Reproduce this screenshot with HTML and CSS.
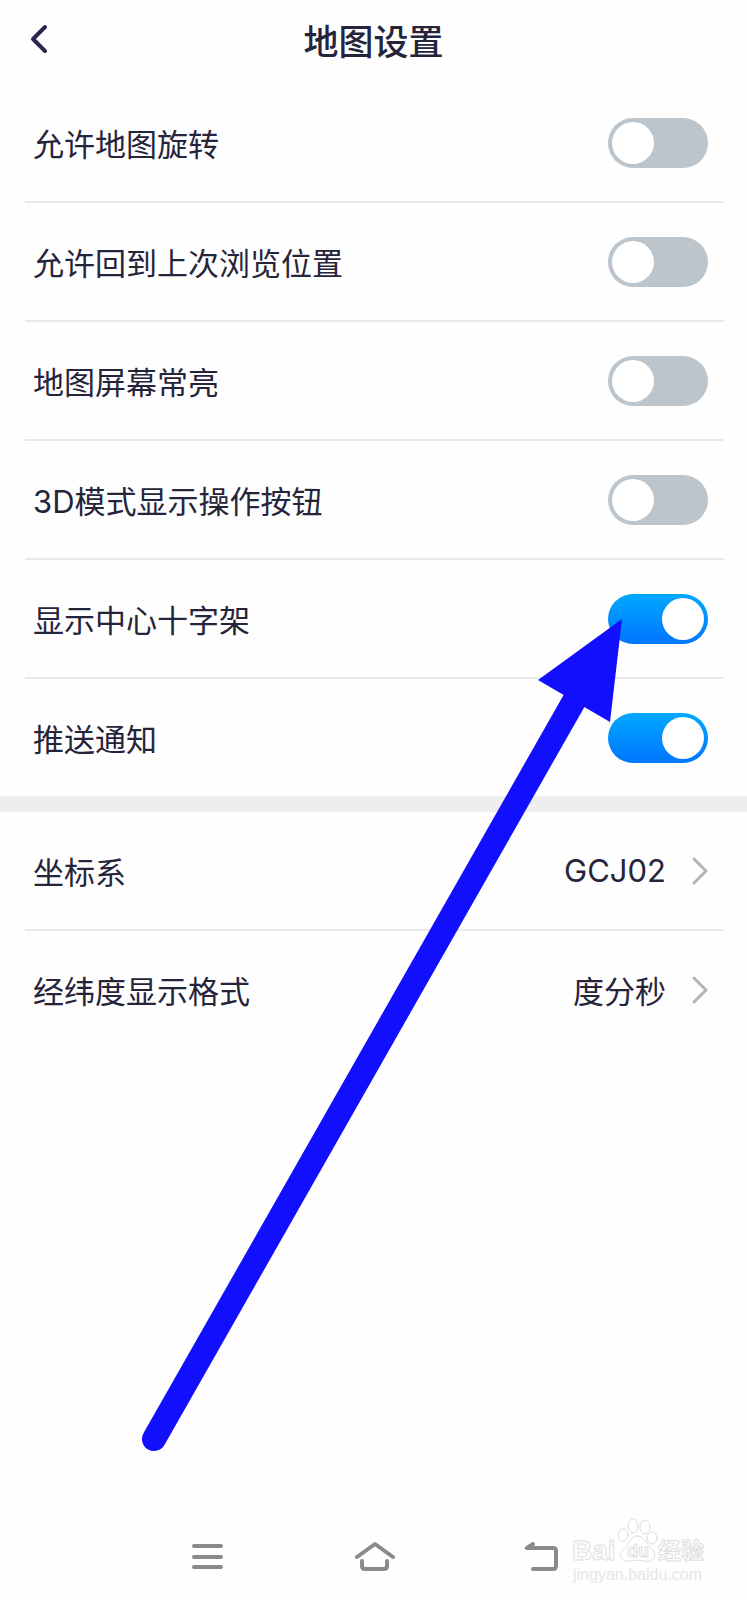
FILE: index.html
```html
<!DOCTYPE html>
<html lang="zh-CN">
<head>
  <meta charset="UTF-8">
  <meta name="viewport" content="width=device-width, initial-scale=1.0">
  <title>地图设置</title>
  <link rel="stylesheet" href="styles.css">
</head>
<body>
  <header class="header">
    <button class="back" aria-label="返回">
      <svg width="18" height="30" viewBox="0 0 18 30">
        <path d="M15 3 L3 15 L15 27" />
      </svg>
    </button>
    <h1 class="title">地图设置</h1>
  </header>

  <main>
    <section class="group">
      <label class="row">
        <span>允许地图旋转</span>
        <input class="switch" type="checkbox">
      </label>
      <label class="row">
        <span>允许回到上次浏览位置</span>
        <input class="switch" type="checkbox">
      </label>
      <label class="row">
        <span>地图屏幕常亮</span>
        <input class="switch" type="checkbox">
      </label>
      <label class="row">
        <span>3D模式显示操作按钮</span>
        <input class="switch" type="checkbox">
      </label>
      <label class="row">
        <span>显示中心十字架</span>
        <input class="switch" type="checkbox" checked>
      </label>
      <label class="row">
        <span>推送通知</span>
        <input class="switch" type="checkbox" checked>
      </label>
    </section>

    <section class="group group--links">
      <button class="row">
        <span>坐标系</span>
        <span class="value">GCJ02
          <svg class="chevron" width="17" height="28" viewBox="0 0 17 28">
            <path d="M3 2 L15 14 L3 26" />
          </svg>
        </span>
      </button>
      <button class="row">
        <span>经纬度显示格式</span>
        <span class="value">度分秒
          <svg class="chevron" width="17" height="28" viewBox="0 0 17 28">
            <path d="M3 2 L15 14 L3 26" />
          </svg>
        </span>
      </button>
    </section>
  </main>

  <nav class="navbar">
    <button class="nav-button" aria-label="菜单">
      <svg width="42" height="32" viewBox="0 0 42 32">
        <path d="M8 5 H35 M8 16 H35 M8 26 H35" />
      </svg>
    </button>
    <button class="nav-button" aria-label="主页">
      <svg width="42" height="32" viewBox="0 0 42 32">
        <path d="M4 16 L22 3 L40 16 M9 20 V25 Q9 28 12 28 H31 Q34 28 34 25 V20" />
      </svg>
    </button>
    <button class="nav-button" aria-label="后退">
      <svg width="42" height="32" viewBox="0 0 42 32">
        <path d="M13 3 L7 7 H33 Q36 7 36 10 V25 Q36 28 33 28 H13" />
        <path class="solid" d="M5 7 L13 2 V7 Z" />
      </svg>
    </button>
  </nav>

  <!-- pointer to the crosshair switch -->
  <svg class="arrow" width="482" height="834" viewBox="0 0 482 834">
    <path class="shaft" d="M14 821 L434 83" />
    <path class="head" d="M482 1 L398 62 L470 104 Z" />
  </svg>

  <svg class="watermark" width="140" height="68" viewBox="0 0 140 68">
    <text class="mark" x="2" y="42" font-size="28">Bai</text>
    <ellipse cx="53" cy="17" rx="5" ry="6" />
    <ellipse cx="63" cy="8" rx="5" ry="7" />
    <ellipse cx="75" cy="9" rx="5" ry="7" />
    <ellipse cx="82" cy="20" rx="5" ry="6" />
    <path d="M67 18 C74 18 77 27 82 31 C88 37 83 45 75 43 C70 42 65 42 60 43 C52 45 47 37 54 31 C59 27 60 18 67 18 Z" />
    <text class="mark" x="57" y="39" font-size="18">du</text>
    <text class="mark" x="88" y="41" font-size="23">经验</text>
    <text class="url" x="3" y="62" font-size="16">jingyan.baidu.com</text>
  </svg>
</body>
</html>
```
FILE: styles.css
```css
* {
  box-sizing: border-box;
}

body {
  position: relative;
  display: flex;
  flex-direction: column;
  min-height: 100vh;
  margin: 0;
  background: #fefefe;
  color: #26243a;
  font-family: Inter, "Noto Sans CJK SC", sans-serif;
  font-size: 31px;
}

button {
  padding: 0;
  border: none;
  background: none;
  color: inherit;
  font: inherit;
  cursor: pointer;
}

svg {
  display: block;
  fill: none;
  stroke-linecap: round;
  stroke-linejoin: round;
}

.header {
  display: grid;
  grid-template-columns: 60px 1fr 60px;
  align-items: center;
  height: 84px;
}

.back {
  height: 78px;
  padding-left: 30px;
  align-self: start;
}

.back svg {
  stroke: #2f2450;
  stroke-width: 4px;
}

.title {
  margin: 0;
  text-align: center;
  font-size: 35px;
  font-weight: 500;
  line-height: 84px;
}

.group--links {
  border-top: 16px solid #eee;
}

.row {
  display: flex;
  justify-content: space-between;
  align-items: center;
  width: calc(100% - 48px);
  height: 119px;
  margin: 0 23px 0 25px;
  padding: 0 16px 0 8px;
  border-bottom: 2px solid #e9e9eb;
  cursor: pointer;
}

.row:last-child {
  height: 117px;
  border-bottom: none;
}

.switch {
  appearance: none;
  width: 100px;
  height: 50px;
  margin: 0;
  padding: 4px;
  border-radius: 25px;
  background: #bcc4cc;
  cursor: pointer;
}

.switch::before {
  content: "";
  display: block;
  width: 42px;
  height: 42px;
  border-radius: 50%;
  background: #fff;
}

.switch:checked {
  background: linear-gradient(#00a8ff, #0076ff);
}

.switch:checked::before {
  margin-left: auto;
}

.value {
  display: flex;
  align-items: center;
  gap: 25px;
}

.chevron {
  stroke: #b4b4b6;
  stroke-width: 3px;
}

.navbar {
  display: flex;
  justify-content: center;
  align-items: center;
  gap: 125px;
  height: 86px;
  margin-top: auto;
}

.nav-button svg {
  stroke: #8a8a8a;
  stroke-width: 4px;
}

.nav-button .solid {
  fill: #8a8a8a;
  stroke-width: 1px;
}

.arrow {
  position: absolute;
  top: 618px;
  right: 125px;
  pointer-events: none;
}

.shaft {
  stroke: #120fff;
  stroke-width: 24px;
}

.head {
  fill: #120fff;
}

.watermark {
  position: absolute;
  right: 37px;
  bottom: 14px;
  fill: #fff;
  stroke: #dedede;
  stroke-width: 1px;
  pointer-events: none;
}

.mark {
  font-family: "Liberation Sans", "Noto Sans CJK SC", sans-serif;
  font-weight: bold;
}

.url {
  fill: #e6e6e6;
  stroke: none;
  font-family: "Liberation Sans", sans-serif;
}
```
